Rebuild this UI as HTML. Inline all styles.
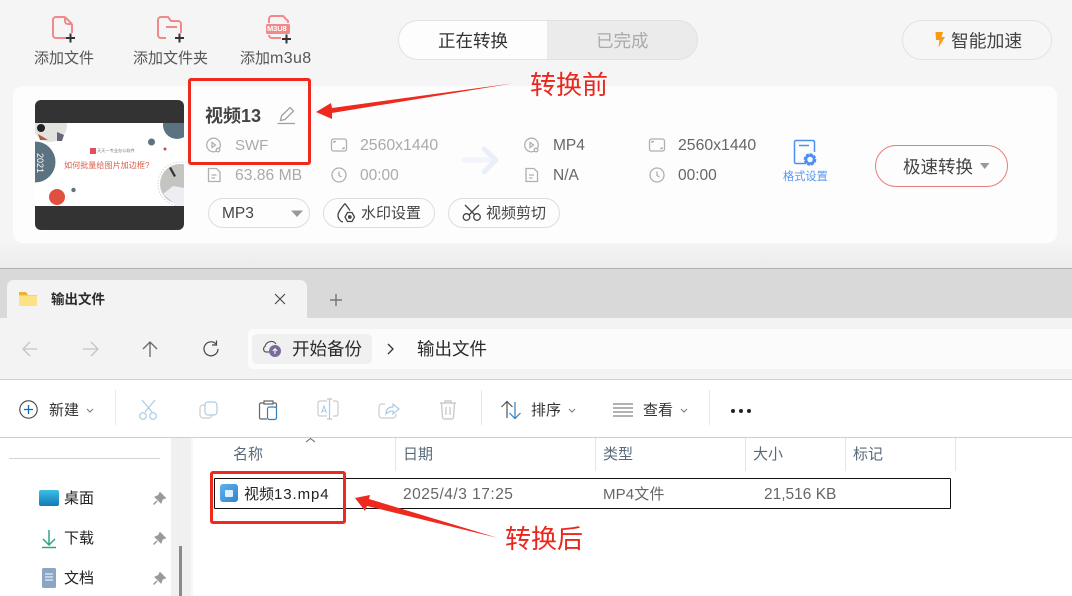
<!DOCTYPE html>
<html lang="zh"><head><meta charset="utf-8"><style>
html,body{margin:0;padding:0}
body{width:1072px;height:596px;overflow:hidden;position:relative;background:#fff;font-family:"Liberation Sans","Noto Sans CJK SC",sans-serif}
.a{position:absolute;box-sizing:border-box}
.t{position:absolute;white-space:nowrap;line-height:20px;color:#333}
svg{position:absolute;overflow:visible}
</style></head><body>
<!-- app top -->
<div class="a" style="left:0;top:0;width:1072px;height:268px;background:linear-gradient(#f5f5f5 0,#f5f5f5 240px,#ececec 268px)"></div>

<svg style="left:0;top:0" width="1072" height="268" fill="none">
<g stroke="#f08a8a" stroke-width="2">
<path d="M65 17H56a3 3 0 0 0-3 3v15a3 3 0 0 0 3 3h10M72 33V24zM65 17l7 7M65 17v4a3 3 0 0 0 3 3h4"/>
<path d="M166 38h-5a3 3 0 0 1-3-3V20a3 3 0 0 1 3-3h7l3 4h7a3 3 0 0 1 3 3v9M166 27h11"/>
<path d="M269 35a3 3 0 0 0 3 3h9M269 23v-4a3 3 0 0 1 3-3h11l5 5v2"/>
</g>
<rect x="266" y="24" width="24" height="10" rx="1.500" fill="#f08a8a"/>
<g stroke="#333" stroke-width="2"><path d="M66 38h9M70.500 33.500v9M175 38h9M179.500 33.500v9M282 39h9M286.500 34.500v9"/></g>
</svg>
<div class="t" style="left:267px;top:24px;font-size:7.500px;line-height:10px;font-weight:bold;color:#fff;letter-spacing:-.1px">M3U8</div>
<div class="t" style="left:34px;top:49px;font-size:15px;color:#555">添加文件</div>
<div class="t" style="left:133px;top:49px;font-size:15px;color:#555">添加文件夹</div>
<div class="t" style="left:240px;top:49px;font-size:15px;color:#555">添加<span style="font-size:16px;letter-spacing:.35px">m3u8</span></div>

<!-- tabs -->
<div class="a" style="left:398px;top:20px;width:300px;height:40px;border-radius:20px;border:1px solid #e2e2e2;background:#ebebeb;overflow:hidden"><div class="a" style="left:0;top:0;width:148px;height:38px;background:#fdfdfd"></div></div>
<div class="t" style="left:438px;top:31px;font-size:17.500px;color:#333">正在转换</div>
<div class="t" style="left:596px;top:31px;font-size:17.500px;color:#aaa">已完成</div>
<div class="a" style="left:902px;top:20px;width:150px;height:40px;border-radius:20px;border:1px solid #e2e2e2;background:#f6f6f6"></div>
<svg style="left:0;top:0" width="1072" height="70"><path d="M935.500 32h7.500l-1.500 5h3.500l-6.500 10.500 1-7.500h-3.500z" fill="#f99a12"/></svg>
<div class="t" style="left:951px;top:31px;font-size:17.800px;color:#444">智能加速</div>

<!-- card -->
<div class="a" style="left:13px;top:86px;width:1044px;height:157px;border-radius:10px;background:#fdfdfd"></div>
<!-- thumb -->
<div class="a" style="left:35px;top:100px;width:149px;height:130px;border-radius:6px;background:#333;overflow:hidden">
 <div class="a" style="left:0;top:23px;width:149px;height:83px;background:#fff"></div>
</div>
<svg style="left:0;top:0" width="200" height="240">
<defs><clipPath id="c"><rect x="35" y="123" width="149" height="83"/></clipPath></defs>
<g clip-path="url(#c)">
<circle cx="50" cy="125" r="17" fill="#e2e2df"/><circle cx="41" cy="128" r="4" fill="#222"/><path d="M38 134l10 6-8 0z" fill="#b55a40"/>
<path d="M57 132l7 3-2 6-5 0z" fill="#667"/>
<circle cx="35" cy="162" r="20.500" fill="#5b7380"/>
<circle cx="177" cy="125" r="14" fill="#5b7380"/>
<circle cx="151.500" cy="142" r="3.500" fill="#5b7380"/>
<circle cx="165" cy="149" r="1.500" fill="#b9574b"/>
<circle cx="57" cy="197" r="8" fill="#e04f3f"/>
<circle cx="73.500" cy="190" r="2.200" fill="#5b7380"/>
<circle cx="180" cy="184" r="22" fill="none" stroke="#bbb" stroke-width=".6" stroke-dasharray="1.500 1.500"/>
<circle cx="180" cy="184" r="20" fill="#c4c4c0"/>
<path d="M163 194l10-8 12 2v16l-8 2z" fill="#eceef2"/>
<path d="M171 167l5 9-2 1-5-9z" fill="#333"/>
</g></svg>
<div class="t" style="left:30px;top:157px;font-size:9px;color:#fff;line-height:12px;transform:rotate(90deg);transform-origin:center;width:20px;text-align:center">2021</div>
<div class="a" style="left:90px;top:148px;width:6px;height:6px;background:#e05060"></div>
<div class="t" style="left:97px;top:146px;font-size:4.200px;line-height:10px;color:#777">天天一专业办公软件</div>
<div class="t" style="left:64px;top:158px;font-size:8.100px;line-height:16px;color:#d9604f">如何批量给图片加边框?</div>

<div class="t" style="left:205px;top:106px;font-size:18px;font-weight:bold;color:#444;line-height:21px">视频13</div>
<svg style="left:0;top:0" width="700" height="240" fill="none" stroke="#b0b0b0" stroke-width="1.300">
<path d="M280.500 120.500l1-4.500 8.500-8.500 3.500 3.500-8.500 8.500zM277.500 123.500h17.500" stroke="#a0a0a0"/>
<circle cx="213.500" cy="145" r="6.800"/><path d="M212 142.500l3.500 2.500-3.500 2.500z"/><circle cx="218" cy="150" r="1.800" fill="#fdfdfd"/>
<path d="M208.500 168.500h8l3.500 3.500v9.500h-11.500zM211.500 175h5M211.500 178h3.500"/>
<rect x="331.500" y="139" width="15" height="12" rx="2"/><path d="M334 143v-1.500h2M344 147v1.500h-2"/>
<circle cx="339" cy="175" r="7"/><path d="M339 171.500v4l2.500 1.500"/>
<circle cx="531.500" cy="145" r="6.800"/><path d="M530 142.500l3.500 2.500-3.500 2.500z"/><circle cx="536" cy="150" r="1.800" fill="#fdfdfd"/>
<path d="M526 168.500h8l3.500 3.500v9.500H526zM529 175h5M529 178h3.500"/>
<rect x="649.500" y="139" width="15" height="12" rx="2"/><path d="M652 143v-1.500h2M662 147v1.500h-2"/>
<circle cx="657" cy="175" r="7"/><path d="M657 171.500v4l2.500 1.500"/>
<path d="M464 160h30" stroke="#f1f4fb" stroke-width="5" stroke-linecap="round"/>
<path d="M484 149l12 11-12 12" stroke="#e9eff9" stroke-width="5" stroke-linecap="round" stroke-linejoin="round"/>
</svg>
<div class="t" style="left:235px;top:136px;font-size:15px;color:#aaa">SWF</div>
<div class="t" style="left:235px;top:166px;font-size:15.700px;color:#aaa">63.86 MB</div>
<div class="t" style="left:360px;top:136px;font-size:15.800px;color:#aaa">2560x1440</div>
<div class="t" style="left:360px;top:166px;font-size:15.500px;color:#aaa">00:00</div>
<div class="t" style="left:553px;top:136px;font-size:15.500px;color:#666">MP4</div>
<div class="t" style="left:553px;top:166px;font-size:15.500px;color:#666">N/A</div>
<div class="t" style="left:678px;top:136px;font-size:15.800px;color:#666">2560x1440</div>
<div class="t" style="left:678px;top:166px;font-size:15.500px;color:#666">00:00</div>

<div class="a" style="left:208px;top:198px;width:102px;height:30px;border-radius:15px;border:1px solid #ddd"></div>
<div class="t" style="left:222px;top:204px;font-size:15.500px;color:#444">MP3</div>
<svg style="left:0;top:0" width="320" height="230"><path d="M291 210.500h12l-6 6.500z" fill="#999"/></svg>
<div class="a" style="left:323px;top:198px;width:112px;height:30px;border-radius:15px;border:1px solid #ddd"></div>
<div class="a" style="left:448px;top:198px;width:112px;height:30px;border-radius:15px;border:1px solid #ddd"></div>
<svg style="left:0;top:0" width="600" height="240" fill="none" stroke="#444" stroke-width="1.300">
<path d="M345 203.500c-3 4-7 8-7 12 0 3.500 2.500 6 5 6.500M345 203.500l5 7"/><path d="M347.500 212.500h4.500l2.500 4.500-2.500 4.500h-4.500l-2.500-4.500z"/><circle cx="349.800" cy="217" r="1.200" fill="#444"/>
<path d="M465 205l10 10M479 205l-10 10"/><circle cx="466.500" cy="217" r="3.300"/><circle cx="477" cy="217" r="3.300"/>
</svg>
<div class="t" style="left:361px;top:204px;font-size:15px;color:#444">水印设置</div>
<div class="t" style="left:486px;top:204px;font-size:15px;color:#444">视频剪切</div>

<svg style="left:0;top:0" width="1072" height="240" fill="none">
<path d="M806 163.500h-10a1.500 1.500 0 0 1-1.500-1.500v-20a1.500 1.500 0 0 1 1.500-1.500h17a1.500 1.500 0 0 1 1.500 1.500v10M799 145.500h10" stroke="#4d8ff0" stroke-width="1.500"/>
<circle cx="810" cy="159.500" r="4.800" stroke="#4d8ff0" stroke-width="3" stroke-dasharray="2.700 1" fill="#fdfdfd"/><circle cx="810" cy="159.500" r="4" stroke="#4d8ff0" stroke-width="2.500"/>
</svg>
<div class="t" style="left:783px;top:167px;font-size:11.200px;color:#5b97ef">格式设置</div>
<div class="a" style="left:875px;top:145px;width:133px;height:42px;border-radius:21px;border:1px solid #e77c7c;background:#fdfdfd"></div>
<div class="t" style="left:903px;top:157px;font-size:17.500px;color:#444">极速转换</div>
<svg style="left:0;top:0" width="1072" height="200"><path d="M980 163h9.500l-4.750 6z" fill="#999"/></svg>

<!-- explorer -->
<div class="a" style="left:0;top:268px;width:1072px;height:51px;background:#d9d9d9;border-top:1px solid #b0b0b0"></div>
<div class="a" style="left:7px;top:280px;width:300px;height:40px;background:#f3f3f3;border-radius:7px 7px 0 0"></div>
<div class="a" style="left:0;top:318px;width:1072px;height:62px;background:#f3f3f3;border-bottom:1px solid #cfcfcf"></div>
<svg style="left:0;top:0" width="400" height="380" fill="none">
<path d="M19 292h7l2 3h9v11H19z" fill="#fbd25c"/><path d="M19 296h18v10H19z" fill="#fde187"/><path d="M19 292h7l2 3-9 0z" fill="#eeb12d"/>
<path d="M275 294l10 10M285 294l-10 10" stroke="#444" stroke-width="1.100"/>
<path d="M336 294v12M330 300h12" stroke="#666" stroke-width="1.200"/>
<path d="M23 349h14M30 342l-7 7 7 7" stroke="#c4c4c4" stroke-width="1.300"/>
<path d="M83 349h14M91 342l7 7-7 7" stroke="#c4c4c4" stroke-width="1.300"/>
<path d="M150 357v-14M143 349l7-7 7 7" stroke="#666" stroke-width="1.300"/>
<path d="M216.500 344.500a7 7 0 1 0 1.500 4.500M216.500 340.500v4.500h-4.500" stroke="#444" stroke-width="1.200"/>
</svg>
<div class="t" style="left:51px;top:290px;font-size:13.500px;font-weight:bold;color:#2b2b2b">输出文件</div>
<div class="a" style="left:248px;top:329px;width:824px;height:40px;background:#fbfbfb;border-radius:5px 0 0 5px"></div>
<div class="a" style="left:252px;top:334px;width:120px;height:30px;background:#f0f0f0;border-radius:5px"></div>
<svg style="left:0;top:0" width="420" height="380" fill="none">
<path d="M269 352h-3a3 3 0 0 1-1-5.500c1-5 8-7 11-2.500" stroke="#555" stroke-width="1.200"/>
<circle cx="275" cy="351" r="6" fill="#7a6c9a"/><path d="M275 354v-5M272.800 351l2.200-2.300 2.200 2.300" stroke="#fff" stroke-width="1"/>
<path d="M388 344l5 5-5 5" stroke="#333" stroke-width="1.300"/>
</svg>
<div class="t" style="left:292px;top:339px;font-size:17.500px;color:#2b2b2b">开始备份</div>
<div class="t" style="left:417px;top:339px;font-size:17.500px;color:#2b2b2b">输出文件</div>

<!-- toolbar -->
<svg style="left:0;top:0" width="800" height="440" fill="none">
<circle cx="28.500" cy="409.500" r="8.700" stroke="#444" stroke-width="1.100"/><path d="M28.500 405v9M24 409.500h9" stroke="#0f6cbd" stroke-width="1.300"/>
<path d="M87 409l3 3 3-3M569 409l3 3 3-3M681 409l3 3 3-3" stroke="#777"/>
<path d="M115.500 390v35M481.500 390v35M709.500 390v35" stroke="#e8e8e8"/>
<g stroke="#a9cbe3" stroke-width="1.200"><path d="M142 400l10 12M155 400l-10 12"/><circle cx="143" cy="416" r="3.300"/><circle cx="153" cy="416" r="3.300"/>
<rect x="205" y="402" width="12" height="13" rx="3"/></g>
<path d="M205 405h-2a3 3 0 0 0-3 3v7a3 3 0 0 0 3 3h6a3 3 0 0 0 3-3" stroke="#ccc" stroke-width="1.200"/>
<path d="M264 403h-3a1.500 1.500 0 0 0-1.500 1.500v13a1.500 1.500 0 0 0 1.500 1.500h6M273 403h2a1.500 1.500 0 0 1 1.500 1.500v3M264 401h9v3h-9z" stroke="#666" stroke-width="1.200"/>
<rect x="267.500" y="407" width="9" height="12.500" rx="2" stroke="#2f7fc1" stroke-width="1.200"/>
<path d="M327 401h-7a2 2 0 0 0-2 2v11a2 2 0 0 0 2 2h7M333 401h3a2 2 0 0 1 2 2v11a2 2 0 0 1-2 2h-3" stroke="#ccc" stroke-width="1.200"/>
<path d="M327 399h5M329.500 399v20M327 419h5" stroke="#a9cbe3" stroke-width="1.200"/>
<path d="M321.500 413l2.500-7 2.500 7M322.500 411h3" stroke="#a9cbe3"/>
<path d="M385 404h-3a3 3 0 0 0-3 3v8a3 3 0 0 0 3 3h11a3 3 0 0 0 3-3v-1" stroke="#ccc" stroke-width="1.200"/>
<path d="M386 414c0-5 3-7 7-7v-3l6 5-6 5v-3c-3 0-5 1-7 3z" stroke="#a9cbe3" stroke-width="1.200"/>
<path d="M440 403h16M445 403v-2h6v2M441.500 403l1 14a2 2 0 0 0 2 2h7a2 2 0 0 0 2-2l1-14M446 407v8M450 407v8" stroke="#ccc" stroke-width="1.400"/>
<path d="M507 418v-16M501.500 407l5.500-5.500 5.500 5.500" stroke="#555" stroke-width="1.200"/>
<path d="M515 402v16M509.500 413l5.500 5.500 5.500-5.500" stroke="#2f7fc1" stroke-width="1.200"/>
<path d="M613 404h20M613 408h20M613 412h20M613 416h20" stroke="#666" stroke-width="1.100"/>
</svg>
<div class="a" style="left:731px;top:408.500px;width:4px;height:4px;border-radius:50%;background:#222"></div>
<div class="a" style="left:739px;top:408.500px;width:4px;height:4px;border-radius:50%;background:#222"></div>
<div class="a" style="left:747px;top:408.500px;width:4px;height:4px;border-radius:50%;background:#222"></div>
<div class="t" style="left:49px;top:401px;font-size:15px;color:#333">新建</div>
<div class="t" style="left:531px;top:401px;font-size:15px;color:#333">排序</div>
<div class="t" style="left:643px;top:401px;font-size:15px;color:#333">查看</div>
<div class="a" style="left:0;top:437px;width:1072px;height:1px;background:#cfcfcf"></div>

<!-- sidebar -->
<div class="a" style="left:171px;top:438px;width:20px;height:158px;background:#f0f0f0"></div>
<div class="a" style="left:191px;top:438px;width:2px;height:158px;background:#f8f8f8"></div>
<div class="a" style="left:179px;top:546px;width:3px;height:50px;background:#8a8a8a"></div>
<div class="a" style="left:9px;top:458px;width:151px;height:1px;background:#d4d4d4"></div>
<div class="a" style="left:39px;top:490px;width:20px;height:16px;border-radius:2px;background:linear-gradient(#3bc0e6,#1478b8)"></div>
<svg style="left:0;top:0" width="180" height="596" fill="none">
<path d="M49 530v15M43 539l6 6 6-6" stroke="#28a58a" stroke-width="1.500"/><path d="M42 547.500h14" stroke="#28a58a" stroke-width="1.500"/>
<rect x="42" y="568" width="14" height="20" rx="1.500" fill="#8ba6c4"/><path d="M45 574h8M45 577h8M45 580h8" stroke="#fff"/>
<g fill="#9a9a9a" stroke="#9a9a9a">
<path d="M160 492.500l5.500 5.500-3 1-1.500 4-6-6 3.500-1.500z"/><path d="M157 501l-3.500 3.500" stroke-width="1.500"/>
<path d="M160 532.500l5.500 5.500-3 1-1.500 4-6-6 3.500-1.500z"/><path d="M157 541l-3.500 3.500" stroke-width="1.500"/>
<path d="M160 572.500l5.500 5.500-3 1-1.500 4-6-6 3.500-1.500z"/><path d="M157 581l-3.500 3.500" stroke-width="1.500"/>
</g>
</svg>
<div class="t" style="left:64px;top:489px;font-size:15px;color:#222">桌面</div>
<div class="t" style="left:64px;top:529px;font-size:15px;color:#222">下载</div>
<div class="t" style="left:64px;top:569px;font-size:15px;color:#222">文档</div>

<!-- headers -->
<svg style="left:0;top:0" width="1000" height="480" fill="none"><path d="M306 442l4.500-3.500 4.500 3.500" stroke="#666"/>
<path d="M395.500 438v33M595.500 438v33M745.500 438v33M845.500 438v33M955.500 438v33" stroke="#e5e5e5"/></svg>
<div class="t" style="left:233px;top:445px;font-size:15px;color:#5a6a7a">名称</div>
<div class="t" style="left:403px;top:445px;font-size:15px;color:#5a6a7a">日期</div>
<div class="t" style="left:603px;top:445px;font-size:15px;color:#5a6a7a">类型</div>
<div class="t" style="left:753px;top:445px;font-size:15px;color:#5a6a7a">大小</div>
<div class="t" style="left:853px;top:445px;font-size:15px;color:#5a6a7a">标记</div>

<!-- row -->
<div class="a" style="left:214px;top:478px;width:737px;height:31px;border:1px solid #111;border-radius:1px"></div>
<div class="a" style="left:220px;top:484px;width:18px;height:18px;border-radius:3px;background:linear-gradient(135deg,#5fb2ec,#2e84d2)"></div>
<div class="a" style="left:225px;top:490px;width:8px;height:7px;background:#dff0fb;border-radius:1px"></div>
<div class="t" style="left:244px;top:485px;font-size:15px;color:#222">视频<span style="letter-spacing:.9px">13.mp4</span></div>
<div class="t" style="left:403px;top:485px;font-size:15.500px;letter-spacing:.5px;color:#666">2025/4/3 17:25</div>
<div class="t" style="left:603px;top:485px;font-size:15px;letter-spacing:.15px;color:#666">MP4文件</div>
<div class="t" style="left:764px;top:485px;font-size:15.500px;color:#666">21,516 KB</div>

<!-- annotations -->
<div class="a" style="left:188px;top:78px;width:123px;height:87px;border:3.500px solid #ee2a1e;border-radius:3px"></div>
<div class="a" style="left:210px;top:471px;width:136px;height:53px;border:3.500px solid #ee2a1e;border-radius:3px"></div>
<svg style="left:0;top:0" width="1072" height="596">
<path d="M515 83L332 108L331 103L316 112L332 119L332 113Z" fill="#ee2a1e"/>
<path d="M498 538L369 499L370 495L355 498L365 511L367 506Z" fill="#ee2a1e"/>
</svg>
<div class="t" style="left:530px;top:70px;font-size:26px;line-height:30px;color:#e8281e">转换前</div>
<div class="t" style="left:505px;top:524px;font-size:26px;line-height:30px;color:#e8281e">转换后</div>
</body></html>
